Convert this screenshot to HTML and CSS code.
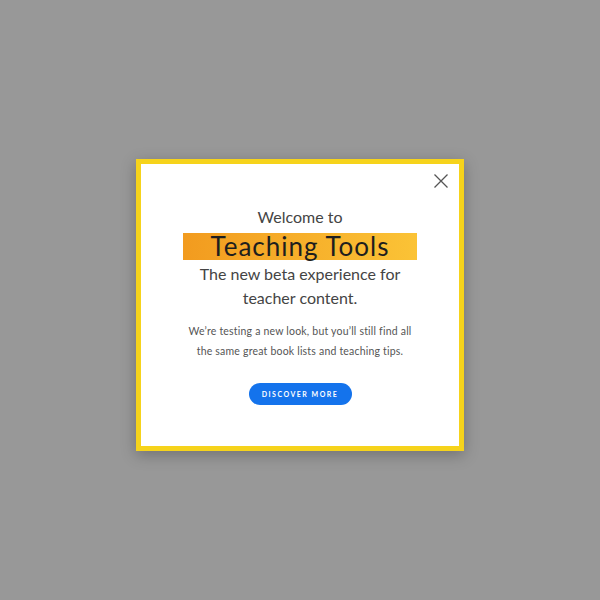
FILE: index.html
```html
<!DOCTYPE html>
<html>
<head>
<meta charset="utf-8">
<link rel="stylesheet" href="styles.css">
</head>
<body>
<div class="modal">
  <button class="close" aria-label="Close">
    <svg width="16" height="16" viewBox="0 0 16 16"><path d="M1.5 1.5 L14.5 14.5 M14.5 1.5 L1.5 14.5" stroke="#555" stroke-width="1.3" fill="none"/></svg>
  </button>
  <div class="content">
    <div class="welcome">Welcome to</div>
    <div class="title">Teaching Tools</div>
    <div class="subtitle">The new beta experience for<br>teacher content.</div>
    <p class="desc">We’re testing a new look, but you’ll still find all<br>the same great book lists and teaching tips.</p>
    <a class="btn" href="#">Discover more</a>
  </div>
</div>
</body>
</html>
```
FILE: styles.css
```css
html, body {
  margin: 0;
  padding: 0;
}
body {
  background: #989898;
  width: 600px;
  height: 600px;
  display: flex;
  justify-content: center;
  align-items: flex-start;
  padding-top: 159px;
  box-sizing: border-box;
  font-family: Lato, "Open Sans", sans-serif;
}
.modal {
  position: relative;
  width: 328px;
  height: 292px;
  box-sizing: border-box;
  border: 5px solid #f6d31b;
  background: #fff;
  box-shadow: 0 4px 14px rgba(0,0,0,0.25);
}
.close {
  position: absolute;
  top: 9px;
  right: 10px;
  background: none;
  border: 0;
  padding: 0;
  width: 16px;
  height: 16px;
  cursor: pointer;
}
.close svg { display: block; }
.content {
  display: flex;
  flex-direction: column;
  align-items: center;
  padding-top: 41px;
}
.welcome {
  font-size: 16px;
  line-height: 24px;
  color: #444;
}
.title {
  margin-top: 4px;
  width: 234px;
  height: 27px;
  background: linear-gradient(90deg, #f29b1f 0%, #fbc336 100%);
  font-size: 26px;
  letter-spacing: 1px;
  line-height: 27px;
  text-align: center;
  color: #1e1e1e;
}
.subtitle {
  margin-top: 2px;
  font-size: 16px;
  line-height: 24px;
  color: #444;
  text-align: center;
}
.desc {
  margin: 11px 0 0;
  font-size: 10.5px;
  letter-spacing: 0.2px;
  line-height: 20px;
  color: #555;
  text-align: center;
}
.btn {
  margin-top: 22px;
  width: 103px;
  height: 22px;
  border-radius: 11px;
  background: #1473ec;
  color: #fff;
  text-decoration: none;
  text-transform: uppercase;
  font-size: 7px;
  font-weight: 700;
  letter-spacing: 1.5px;
  line-height: 22px;
  text-align: center;
}
```
